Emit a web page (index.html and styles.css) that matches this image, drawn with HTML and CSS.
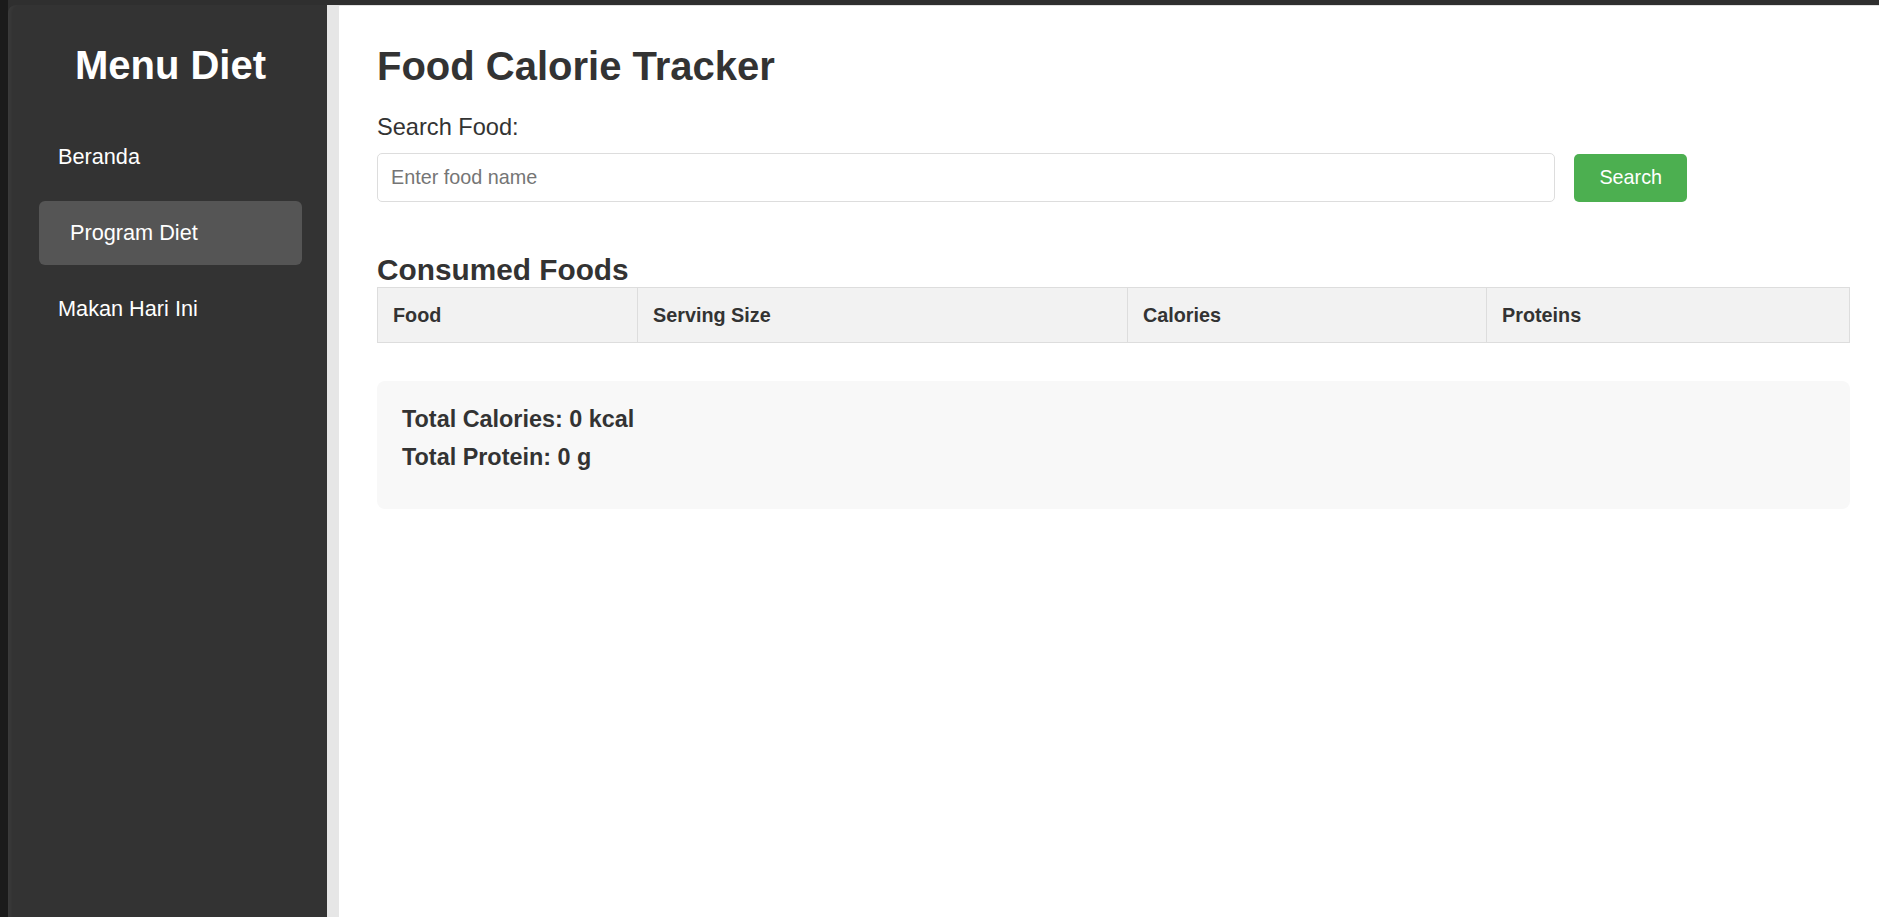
FILE: index.html
```html
<!DOCTYPE html>
<html lang="id">
<head>
<meta charset="utf-8">
<title>Food Calorie Tracker</title>
<link rel="stylesheet" href="styles.css">
</head>
<body>
<div class="frame">
  <aside class="sidebar">
    <h2 class="side-title">Menu Diet</h2>
    <nav class="nav">
      <a class="nav-item" href="#">Beranda</a>
      <a class="nav-item active" href="#">Program Diet</a>
      <a class="nav-item" href="#">Makan Hari Ini</a>
    </nav>
  </aside>
  <main class="main">
    <h1 class="title">Food Calorie Tracker</h1>
    <label class="search-label" for="food">Search Food:</label>
    <div class="search-row">
      <input id="food" class="search-input" type="text" placeholder="Enter food name">
      <button class="search-btn" type="button">Search</button>
    </div>
    <h2 class="section-title">Consumed Foods</h2>
    <table class="foods">
      <colgroup>
        <col class="c-food">
        <col class="c-size">
        <col class="c-cal">
        <col class="c-prot">
      </colgroup>
      <thead>
        <tr>
          <th>Food</th>
          <th>Serving Size</th>
          <th>Calories</th>
          <th>Proteins</th>
        </tr>
      </thead>
      <tbody></tbody>
    </table>
    <div class="summary">
      <p class="summary-line">Total Calories: 0 kcal</p>
      <p class="summary-line">Total Protein: 0 g</p>
    </div>
  </main>
</div>
</body>
</html>
```
FILE: styles.css
```css
* { box-sizing: border-box; }

html, body {
  margin: 0;
  padding: 0;
  height: 100%;
}

body {
  background: #2f2f2f;
  font-family: "Liberation Sans", Arial, sans-serif;
  color: #333;
}

.frame {
  display: flex;
  min-height: 100vh;
  padding-top: 5px;
  border-left: 8px solid #1b1b1b;
}

.sidebar {
  width: 319px;
  flex: 0 0 319px;
  background: #333;
  border-top-left-radius: 8px;
  box-shadow: inset 5px 0 4px -3px rgba(255, 255, 255, 0.05);
  padding: 37px 25px 0 31px;
  color: #fff;
}

.side-title {
  margin: 0 0 37px;
  font-size: 40px;
  line-height: 46px;
  font-weight: bold;
  text-align: center;
  color: #fff;
}

.nav {
  display: flex;
  flex-direction: column;
  gap: 12px;
}

.nav-item {
  display: block;
  height: 64px;
  padding: 19px 19px 20px;
  font-size: 21.7px;
  line-height: 25px;
  color: #fff;
  text-decoration: none;
  border-radius: 6px;
}

.nav-item.active {
  background: #555;
  padding-left: 31px;
}

.main {
  flex: 1;
  background: #fff;
  border-left: 12px solid #e6e6e6;
  border-top: 1px solid #e2e2e2;
  padding: 37px 29px 40px 38px;
}

.title {
  margin: 0 0 24px;
  font-size: 40px;
  line-height: 46px;
  font-weight: bold;
  color: #333;
}

.search-label {
  display: block;
  font-size: 23.6px;
  line-height: 28px;
  color: #333;
  margin-bottom: 12px;
}

.search-row {
  display: flex;
  align-items: center;
  gap: 19px;
}

.search-input {
  width: 80%;
  height: 49px;
  padding: 0 13px;
  border: 1px solid #ddd;
  border-radius: 5px;
  font-family: "Liberation Sans", Arial, sans-serif;
  font-size: 19.8px;
  color: #333;
  background: #fff;
  outline: none;
}

.search-input::placeholder {
  color: #757575;
}

.search-btn {
  height: 48px;
  padding: 0 25px;
  border: none;
  border-radius: 5px;
  background: #4caf50;
  color: #fff;
  font-family: "Liberation Sans", Arial, sans-serif;
  font-size: 19.8px;
  cursor: pointer;
}

.section-title {
  margin: 51px 0 0;
  font-size: 29.8px;
  line-height: 34px;
  font-weight: bold;
  color: #333;
}

.foods {
  width: 100%;
  border-collapse: collapse;
  table-layout: fixed;
  margin-bottom: 38px;
}

.c-food { width: 260px; }
.c-size { width: 490px; }
.c-cal { width: 359px; }

.foods th {
  background: #f2f2f2;
  border: 1px solid #ddd;
  padding: 15px 15px;
  height: 55px;
  text-align: left;
  font-size: 19.8px;
  line-height: 23px;
  font-weight: bold;
  color: #333;
}

.summary {
  background: #f8f8f8;
  border-radius: 8px;
  padding: 24px 25px 38px;
}

.summary-line {
  margin: 0;
  font-size: 23.4px;
  line-height: 28px;
  font-weight: bold;
  color: #333;
}

.summary-line + .summary-line {
  margin-top: 10px;
}
```
